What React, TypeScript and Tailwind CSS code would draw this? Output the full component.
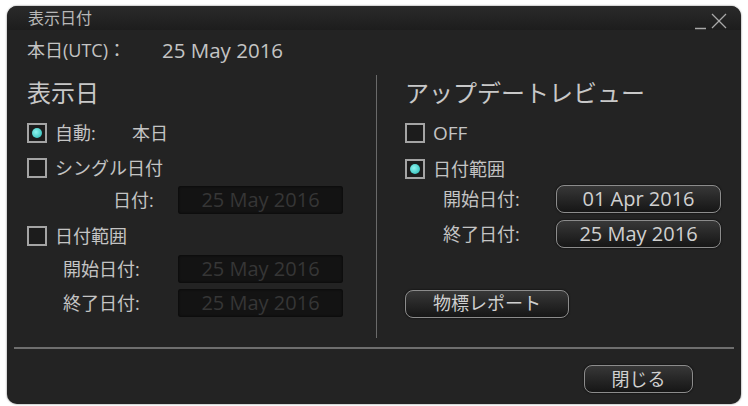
import React from "react";

const font = { fontFamily: '"Open Sans","Noto Sans CJK JP",sans-serif' };

function Box({ checked }: { checked?: boolean }) {
  return (
    <div className="w-[20px] h-[20px] border-2 border-[#a4a4a4] bg-[#1c1c1c] flex items-center justify-center shrink-0">
      {checked && (
        <div className="w-[10px] h-[10px] rounded-full bg-[radial-gradient(circle_at_40%_40%,#8ff5f0,#1fb5b0)]" />
      )}
    </div>
  );
}

function DisabledField({ text }: { text: string }) {
  return (
    <div className="w-[165px] h-[28px] rounded-[3px] bg-[#131313] shadow-[inset_0_0_3px_rgba(0,0,0,0.8)] flex items-center justify-center text-[#363636] text-[20px]">
      {text}
    </div>
  );
}

function Btn({ text, w, big }: { text: string; w: string; big?: boolean }) {
  return (
    <div
      className={`${w} h-[28px] rounded-[8px] border-[1.5px] border-[#8c8c8c] bg-gradient-to-b from-[#383838] to-[#161616] flex items-center justify-center text-[#d0d0d0] ${big ? "text-[20px]" : "text-[18px]"} shadow-[0_0_2px_rgba(0,0,0,0.9)]`}
    >
      {text}
    </div>
  );
}

export default function App() {
  return (
    <div className="w-[748px] h-[406px] bg-white relative overflow-hidden" style={font}>
      <div className="absolute left-[7px] top-[6px] w-[734px] h-[398px] rounded-[10px] bg-[#232323] flex flex-col overflow-hidden shadow-[0_0_2px_rgba(0,0,0,0.6)]">
        {/* title bar */}
        <div className="h-[24px] shrink-0 bg-gradient-to-b from-[#2a2a2a] to-[#1d1d1d] flex items-center pl-[21px] pr-[12px] relative">
          <span className="text-[16px] text-[#b8b8b8] leading-none">表示日付</span>
          <svg className="absolute left-[687px] top-[6px]" width="36" height="18" viewBox="0 0 36 18">
            <line x1="1" y1="16.5" x2="12" y2="16.5" stroke="#a8a8a8" strokeWidth="1.5" />
            <line x1="18" y1="2" x2="32" y2="16" stroke="#a8a8a8" strokeWidth="1.3" />
            <line x1="32" y1="2" x2="18" y2="16" stroke="#a8a8a8" strokeWidth="1.3" />
          </svg>
        </div>
        {/* UTC row */}
        <div className="h-[40px] shrink-0 flex items-center pl-[20px] text-[18px] text-[#c4c4c4]">
          <span className="w-[135px]">本日(UTC)：</span>
          <span className="text-[20.5px]">25 May 2016</span>
        </div>
        {/* body */}
        <div className="h-[263px] shrink-0 mt-[5px] flex">
          {/* left */}
          <div className="w-[369px] flex flex-col pl-[20px] text-[18px] text-[#c4c4c4]">
            <div className="h-[35px] flex items-center text-[24px] text-[#c8c8c8]">表示日</div>
            <div className="mt-[9px] h-[28px] flex items-center">
              <Box checked />
              <span className="ml-[8px] w-[77px]">自動:</span>
              <span>本日</span>
            </div>
            <div className="mt-[7px] h-[28px] flex items-center">
              <Box />
              <span className="ml-[8px]">シングル日付</span>
            </div>
            <div className="mt-[4px] h-[28px] flex items-center">
              <span className="ml-[86px] w-[65px]">日付:</span>
              <DisabledField text="25 May 2016" />
            </div>
            <div className="mt-[8px] h-[28px] flex items-center">
              <Box />
              <span className="ml-[8px]">日付範囲</span>
            </div>
            <div className="mt-[5px] h-[28px] flex items-center">
              <span className="ml-[36px] w-[115px]">開始日付:</span>
              <DisabledField text="25 May 2016" />
            </div>
            <div className="mt-[6px] h-[28px] flex items-center">
              <span className="ml-[36px] w-[115px]">終了日付:</span>
              <DisabledField text="25 May 2016" />
            </div>
          </div>
          {/* divider */}
          <div className="w-[1px] bg-[#6a6a6a] h-full" />
          {/* right */}
          <div className="flex-1 flex flex-col pl-[28px] text-[18px] text-[#c4c4c4]">
            <div className="h-[35px] flex items-center text-[24px] text-[#c8c8c8]">アップデートレビュー</div>
            <div className="mt-[9px] h-[28px] flex items-center">
              <Box />
              <span className="ml-[8px] text-[19px]">OFF</span>
            </div>
            <div className="mt-[8px] h-[28px] flex items-center">
              <Box checked />
              <span className="ml-[8px]">日付範囲</span>
            </div>
            <div className="mt-[2px] h-[28px] flex items-center">
              <span className="ml-[38px] w-[113px]">開始日付:</span>
              <Btn text="01 Apr 2016" w="w-[165px]" big />
            </div>
            <div className="mt-[7px] h-[28px] flex items-center">
              <span className="ml-[38px] w-[113px]">終了日付:</span>
              <Btn text="25 May 2016" w="w-[165px]" big />
            </div>
            <div className="mt-[41px] h-[29px] flex items-center">
              <Btn text="物標レポート" w="w-[164px]" />
            </div>
          </div>
        </div>
        {/* hr */}
        <div className="mt-[9px] mx-[7px] h-[2px] bg-[#6e6e6e] shrink-0" />
        {/* footer */}
        <div className="mt-[16px] flex justify-end pr-[48px]">
          <Btn text="閉じる" w="w-[109px]" />
        </div>
      </div>
    </div>
  );
}
